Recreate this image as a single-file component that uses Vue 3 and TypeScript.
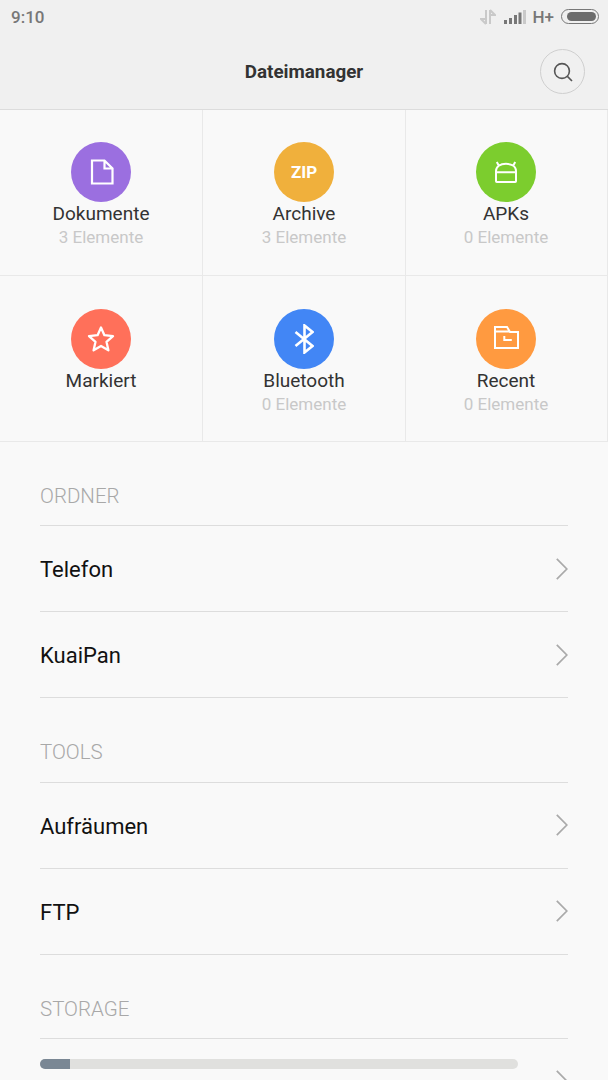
<script setup lang="ts">
interface Tile {
  name: string;
  count?: string;
  color: string;
  icon: string;
}

const tiles: Tile[] = [
  { name: 'Dokumente', count: '3 Elemente', color: '#9b6fe0', icon: 'doc' },
  { name: 'Archive', count: '3 Elemente', color: '#f0b03c', icon: 'zip' },
  { name: 'APKs', count: '0 Elemente', color: '#7ccd2e', icon: 'apk' },
  { name: 'Markiert', color: '#ff705a', icon: 'star' },
  { name: 'Bluetooth', count: '0 Elemente', color: '#4286f5', icon: 'bt' },
  { name: 'Recent', count: '0 Elemente', color: '#ff9a40', icon: 'recent' },
];

const sections = [
  { title: 'ORDNER', rows: ['Telefon', 'KuaiPan'] },
  { title: 'TOOLS', rows: ['Aufräumen', 'FTP'] },
];
</script>

<template>
  <div class="page">
    <header class="top">
      <div class="status">
        <span class="time">9:10</span>
        <div class="indicators">
          <svg width="16" height="16" viewBox="0 0 16 16" class="arrows">
            <path d="M6 1v14M6 15L1 10h5M10 15V1M10 1l5 5h-5" fill="none" stroke="#c9c9c9" stroke-width="2" />
          </svg>
          <svg width="22" height="16" viewBox="0 0 22 16" class="signal">
            <rect x="0" y="11" width="3" height="4" fill="#777" />
            <rect x="5" y="9" width="3" height="6" fill="#777" />
            <rect x="10" y="6" width="3" height="9" fill="#777" />
            <rect x="14.500" y="3.500" width="3" height="11.500" fill="#777" />
            <rect x="19" y="1" width="3" height="14" fill="#c9c9c9" />
          </svg>
          <span class="net">H+</span>
          <span class="battery"><span class="battery-fill"></span></span>
        </div>
      </div>
      <div class="titlebar">
        <h1>Dateimanager</h1>
        <button class="search" type="button" aria-label="Suchen">
          <svg width="22" height="22" viewBox="0 0 22 22" fill="none" stroke="#555" stroke-width="1.600">
            <circle cx="10" cy="10" r="7.400" />
            <path d="M15.400 15.400L20 20" />
          </svg>
        </button>
      </div>
    </header>

    <div class="grid">
      <div v-for="tile in tiles" :key="tile.name" class="tile">
        <div class="circle" :style="{ background: tile.color }">
          <svg v-if="tile.icon === 'doc'" width="26" height="26" viewBox="0 0 26 26" fill="none" stroke="#fff" stroke-width="2.200">
            <path d="M4 1.500h12.500l8 8v15H4zM16.500 2v7.500h8" />
          </svg>
          <span v-else-if="tile.icon === 'zip'" class="zip">ZIP</span>
          <svg v-else-if="tile.icon === 'apk'" width="22" height="22" viewBox="0 0 22 22" fill="none" stroke="#fff" stroke-width="2">
            <path d="M1 20.200V10C1 5.500 5 2.800 11 2.800S21 5.500 21 10v10.200a.8.800 0 0 1-.8.800H1.800a.8.800 0 0 1-.8-.8zM1 11.200h20M3.600 4.200L1.800 1M18.400 4.200L20.200 1" />
          </svg>
          <svg v-else-if="tile.icon === 'star'" width="28" height="28" viewBox="0 0 28 28" fill="none" stroke="#fff" stroke-width="2.300" stroke-linejoin="round">
            <path d="M14 2.500l3.400 7.700 8.600.9-6.500 5.700 1.900 8.500L14 20.900l-7.400 4.400 1.900-8.500L2 11.100l8.600-.9z" />
          </svg>
          <svg v-else-if="tile.icon === 'bt'" width="20" height="30" viewBox="0 0 20 30" fill="none" stroke="#fff" stroke-width="2.600">
            <path d="M1.500 8l17 14-8 6.500V1.500l8 6.500-17 14" />
          </svg>
          <svg v-else class="folder" width="25" height="23" viewBox="0 0 25 23" fill="none" stroke="#fff" stroke-width="2">
            <path d="M1 22V1h12l3 5h8v16zM1 5.500h15M10.300 10v4h7.500" />
          </svg>
        </div>
        <div class="name">{{ tile.name }}</div>
        <div v-if="tile.count" class="count">{{ tile.count }}</div>
      </div>
    </div>

    <section v-for="section in sections" :key="section.title" class="section">
      <h2>{{ section.title }}</h2>
      <div v-for="row in section.rows" :key="row" class="row">
        <span class="label">{{ row }}</span>
        <svg class="chev" width="12" height="22" viewBox="0 0 12 22" fill="none" stroke="#aaa" stroke-width="1.700">
          <path d="M.8.800l10 10.200-10 10.200" />
        </svg>
      </div>
    </section>

    <section class="section">
      <h2>STORAGE</h2>
      <div class="row storage">
        <div class="bar"><div class="bar-fill" :style="{ width: '30px' }"></div></div>
        <svg class="chev" width="12" height="22" viewBox="0 0 12 22" fill="none" stroke="#aaa" stroke-width="1.700">
          <path d="M.8.800l10 10.200-10 10.200" />
        </svg>
      </div>
    </section>
  </div>
</template>

<style>
html,
body {
  margin: 0;
  background: #f9f9f9;
}
</style>

<style scoped>
.page {
  width: 608px;
  height: 1080px;
  overflow: hidden;
  background: #f9f9f9;
  font-family: Roboto, sans-serif;
}

.top {
  height: 109px;
  background: #f0f0f0;
  border-bottom: 1px solid #dcdcdc;
}

.status {
  height: 33px;
  display: flex;
  align-items: center;
  justify-content: space-between;
  padding: 0 9px 0 11px;
}

.time {
  font-size: 17px;
  font-weight: 500;
  color: #777;
}

.indicators {
  display: flex;
  align-items: center;
}

.arrows {
  margin-right: 8px;
}

.signal {
  margin-right: 7px;
}

.net {
  font-size: 17px;
  font-weight: 500;
  color: #777;
  margin-right: 7px;
}

.battery {
  box-sizing: border-box;
  width: 38px;
  height: 15px;
  border: 1.500px solid #777;
  border-radius: 8px;
  padding: 2px;
  display: block;
}

.battery-fill {
  display: block;
  height: 100%;
  margin-left: 3px;
  background: #6c6c6c;
  border-radius: 5px;
}

.titlebar {
  height: 76px;
  display: flex;
  align-items: center;
  justify-content: center;
  position: relative;
}

h1 {
  margin: 1px 0 0;
  font-size: 18.800px;
  font-weight: 700;
  color: #333;
}

.search {
  position: absolute;
  right: 23px;
  top: 16px;
  box-sizing: border-box;
  width: 45px;
  height: 45px;
  padding: 0;
  display: flex;
  align-items: center;
  justify-content: center;
  background: transparent;
  border: 1px solid #cfcfcf;
  border-radius: 50%;
}

.grid {
  display: grid;
  grid-template-columns: 203px 203px 202px;
  grid-auto-rows: 166px;
}

.tile {
  box-sizing: border-box;
  display: flex;
  flex-direction: column;
  align-items: center;
  padding-top: 32px;
  border-right: 1px solid #e9e9e9;
  border-bottom: 1px solid #e9e9e9;
}

.tile:nth-child(n + 4) {
  padding-top: 33px;
}

.tile:nth-child(3n) {
  padding-right: 1px;
}

.circle {
  width: 60px;
  height: 60px;
  border-radius: 50%;
  display: flex;
  align-items: center;
  justify-content: center;
}

.folder {
  margin-bottom: 3px;
}

.zip {
  color: #fff;
  font-size: 17px;
  font-weight: 700;
}

.name {
  margin-top: 1px;
  font-size: 19px;
  line-height: 22px;
  color: #333;
}

.count {
  margin-top: 1px;
  font-size: 17px;
  line-height: 22px;
  color: #c8c8c8;
}

.section {
  padding: 0 40px;
}

h2 {
  margin: 0;
  height: 84.400px;
  box-sizing: border-box;
  padding-top: 42px;
  font-size: 20.500px;
  line-height: 24px;
  font-weight: 300;
  color: #a8a8a8;
  border-bottom: 1px solid #dddddd;
}

.row {
  box-sizing: border-box;
  height: 86px;
  display: flex;
  align-items: center;
  justify-content: space-between;
  font-size: 22px;
  color: #111;
  border-bottom: 1px solid #dddddd;
}

.label {
  padding-top: 2px;
}

.chev {
  display: block;
}

.storage {
  align-items: flex-start;
  border-bottom: 0;
}

.storage .chev {
  margin-top: 31px;
}

.bar {
  width: 478px;
  height: 10px;
  margin-top: 20px;
  border-radius: 5px;
  background: #e0e0de;
  overflow: hidden;
}

.bar-fill {
  height: 100%;
  background: #7a8794;
}
</style>
